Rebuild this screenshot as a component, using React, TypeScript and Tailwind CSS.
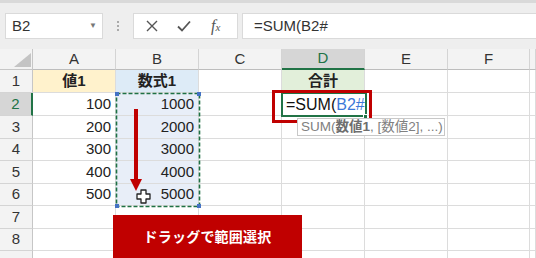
import React from "react";

const W = [
  "w-[33px]",
  "w-[83px]",
  "w-[83px]",
  "w-[83px]",
  "w-[83px]",
  "w-[83px]",
  "w-[82px]",
  "flex-1",
];

const Cell = ({
  i,
  className = "",
  children,
}: {
  i: number;
  className?: string;
  children?: React.ReactNode;
}) => (
  <div
    className={`${W[i]} shrink-0 h-full border-r border-b border-[#dcdcdc] flex items-center ${className}`}
  >
    {children}
  </div>
);

const RowHead = ({ n, active }: { n: number; active?: boolean }) => (
  <div
    className={`${W[0]} shrink-0 h-full flex items-center justify-center border-b border-[#d4d4d4] ${
      active
        ? "bg-[#d6d6d6] text-[#217346] border-r-2 border-r-[#217346]"
        : "bg-[#f3f3f3] text-[#333] border-r border-r-[#c6c6c6]"
    }`}
  >
    {n < 9 ? n : null}
  </div>
);

const rows = [
  { h: "h-[23px]", a: "値1", b: "数式1", d: "合計" },
  { h: "h-[23px]", a: "100", b: "1000" },
  { h: "h-[23px]", a: "200", b: "2000" },
  { h: "h-[22px]", a: "300", b: "3000" },
  { h: "h-[23px]", a: "400", b: "4000" },
  { h: "h-[22px]", a: "500", b: "5000" },
  { h: "h-[23px]" },
  { h: "h-[22px]" },
  { h: "h-[23px]" },
];

export default function App() {
  return (
    <div
      className="relative w-[536px] h-[258px] overflow-hidden bg-white text-[15px] text-[#222]"
      style={{ fontFamily: '"Liberation Sans", "Noto Sans CJK JP", sans-serif' }}
    >
      {/* toolbar */}
      <div className="h-[49px] bg-[#eeeeee] border-t-[3px] border-[#d9d9d9]">
        <div className="flex items-start pt-[10px] h-full">
          <div className="ml-[5px] w-[98px] h-[26px] bg-white border border-[#dadada] flex items-center justify-between pl-[6px] pr-[5px] text-[#333]">
            <span>B2</span>
            <span className="text-[8px] text-[#777]">▼</span>
          </div>
          <div className="w-[30px] h-[26px] flex flex-col items-center justify-center gap-[2px]">
            <span className="w-[2px] h-[2px] bg-[#aaa]" />
            <span className="w-[2px] h-[2px] bg-[#aaa]" />
            <span className="w-[2px] h-[2px] bg-[#aaa]" />
          </div>
          <div className="w-[105px] h-[26px] bg-white border border-[#dadada] flex items-center">
            <svg width="12" height="12" viewBox="0 0 12 12" className="ml-[12px]">
              <path d="M1 1L11 11M11 1L1 11" stroke="#555" strokeWidth="1.4" />
            </svg>
            <svg width="14" height="12" viewBox="0 0 14 12" className="ml-[19px]">
              <path d="M1 6.5L5 10.5L13 1.5" stroke="#555" strokeWidth="1.8" fill="none" />
            </svg>
            <span
              className="ml-[20px] italic text-[#555] text-[16px]"
              style={{ fontFamily: '"Liberation Serif", serif' }}
            >
              f<span className="text-[11px]">x</span>
            </span>
          </div>
          <div className="ml-[4px] flex-1 h-[26px] bg-white border-y border-l border-[#dadada] flex items-center pl-[11px] text-[#333]">
            =SUM(B2#
          </div>
        </div>
      </div>

      {/* column headers */}
      <div className="flex h-[21px] bg-[#f3f3f3] text-[#333]">
        <div className={`${W[0]} shrink-0 h-full border-r border-b border-[#c6c6c6] flex items-end justify-end pr-[1px] pb-[2px]`}>
          <svg width="17" height="14" viewBox="0 0 17 14">
            <polygon points="17,0 17,14 0,14" fill="#c4c4c4" />
          </svg>
        </div>
        {["A", "B", "C", "D", "E", "F", ""].map((c, k) => (
          <div
            key={k}
            className={`${W[k + 1]} shrink-0 h-full flex items-center justify-center border-r border-r-[#d4d4d4] ${
              c === "D"
                ? "bg-[#d6d6d6] text-[#217346] border-b-2 border-b-[#217346]"
                : "border-b border-b-[#bdbdbd]"
            }`}
          >
            {c}
          </div>
        ))}
      </div>

      {/* grid */}
      {rows.map((r, idx) => {
        const n = idx + 1;
        const header = n === 1;
        const sel = n >= 2 && n <= 6;
        return (
          <div key={n} className={`flex ${r.h}`}>
            <RowHead n={n} active={n === 2} />
            <Cell
              i={1}
              className={
                header
                  ? "justify-center font-bold bg-[#fff2cc]"
                  : "justify-end pr-[4px]"
              }
            >
              {r.a}
            </Cell>
            <Cell
              i={2}
              className={
                header
                  ? "justify-center font-bold bg-[#ddebf7]"
                  : sel
                  ? "justify-end pr-[4px] bg-[#e8eef8]"
                  : "justify-end pr-[4px]"
              }
            >
              {r.b}
            </Cell>
            <Cell i={3} />
            <Cell i={4} className={header ? "justify-center font-bold bg-[#e2efda]" : ""}>
              {r.d}
            </Cell>
            <Cell i={5} />
            <Cell i={6} />
            <Cell i={7} />
          </div>
        );
      })}

      {/* selection marquee on B2:B6 */}
      <svg className="absolute left-[115px] top-[92px]" width="86" height="116" viewBox="0 0 86 116">
        <rect x="1.5" y="1.5" width="83" height="113" fill="none" stroke="#1e7145" strokeWidth="1.6" strokeDasharray="4 2" />
        <rect x="0" y="0" width="4" height="4" fill="#4472c4" />
        <rect x="82" y="0" width="4" height="4" fill="#4472c4" />
        <rect x="0" y="112" width="4" height="4" fill="#4472c4" />
        <rect x="82" y="112" width="4" height="4" fill="#4472c4" />
      </svg>

      {/* active cell D2 */}
      <div className="absolute left-[281px] top-[92px] w-[86px] h-[25px] border-2 border-[#217346] flex items-center pl-[3px] text-[16px] text-[#111] bg-white">
        =SUM(<span className="text-[#3c78d8]">B2#</span>
      </div>
      <div className="absolute left-[363px] top-[114px] w-[5px] h-[5px] bg-[#217346] border border-white" />

      {/* red highlight box */}
      <div className="absolute left-[272px] top-[90px] w-[100px] h-[33px] border-[3px] border-[#c00000]" />

      {/* tooltip */}
      <div className="absolute left-[297px] top-[118px] w-[148px] h-[18px] bg-white border border-[#c8c8c8] flex items-center pl-[3px] text-[13.5px] text-[#808080] whitespace-nowrap">
        SUM(<span className="font-bold text-[#6e6e6e]">数値1</span>, [数値2], ...)
      </div>

      {/* drag arrow */}
      <svg className="absolute left-[128px] top-[105px]" width="16" height="88" viewBox="0 0 16 88">
        <line x1="8" y1="4" x2="8" y2="76" stroke="#c00000" strokeWidth="4" />
        <polygon points="2,74 14,74 8,86" fill="#c00000" />
      </svg>

      {/* cell cursor */}
      <svg className="absolute left-[136px] top-[189px]" width="15" height="15" viewBox="0 0 15 15">
        <polygon
          points="5,1 10,1 10,5 14,5 14,10 10,10 10,14 5,14 5,10 1,10 1,5 5,5"
          fill="#fff"
          stroke="#222"
          strokeWidth="1.3"
          strokeLinejoin="round"
        />
      </svg>

      {/* label */}
      <div className="absolute left-[113px] top-[215px] w-[189px] h-[48px] bg-[#c00000] flex items-start justify-center pt-[12px] text-white font-bold text-[14px] tracking-[0.2px]">
        ドラッグで範囲選択
      </div>
    </div>
  );
}
